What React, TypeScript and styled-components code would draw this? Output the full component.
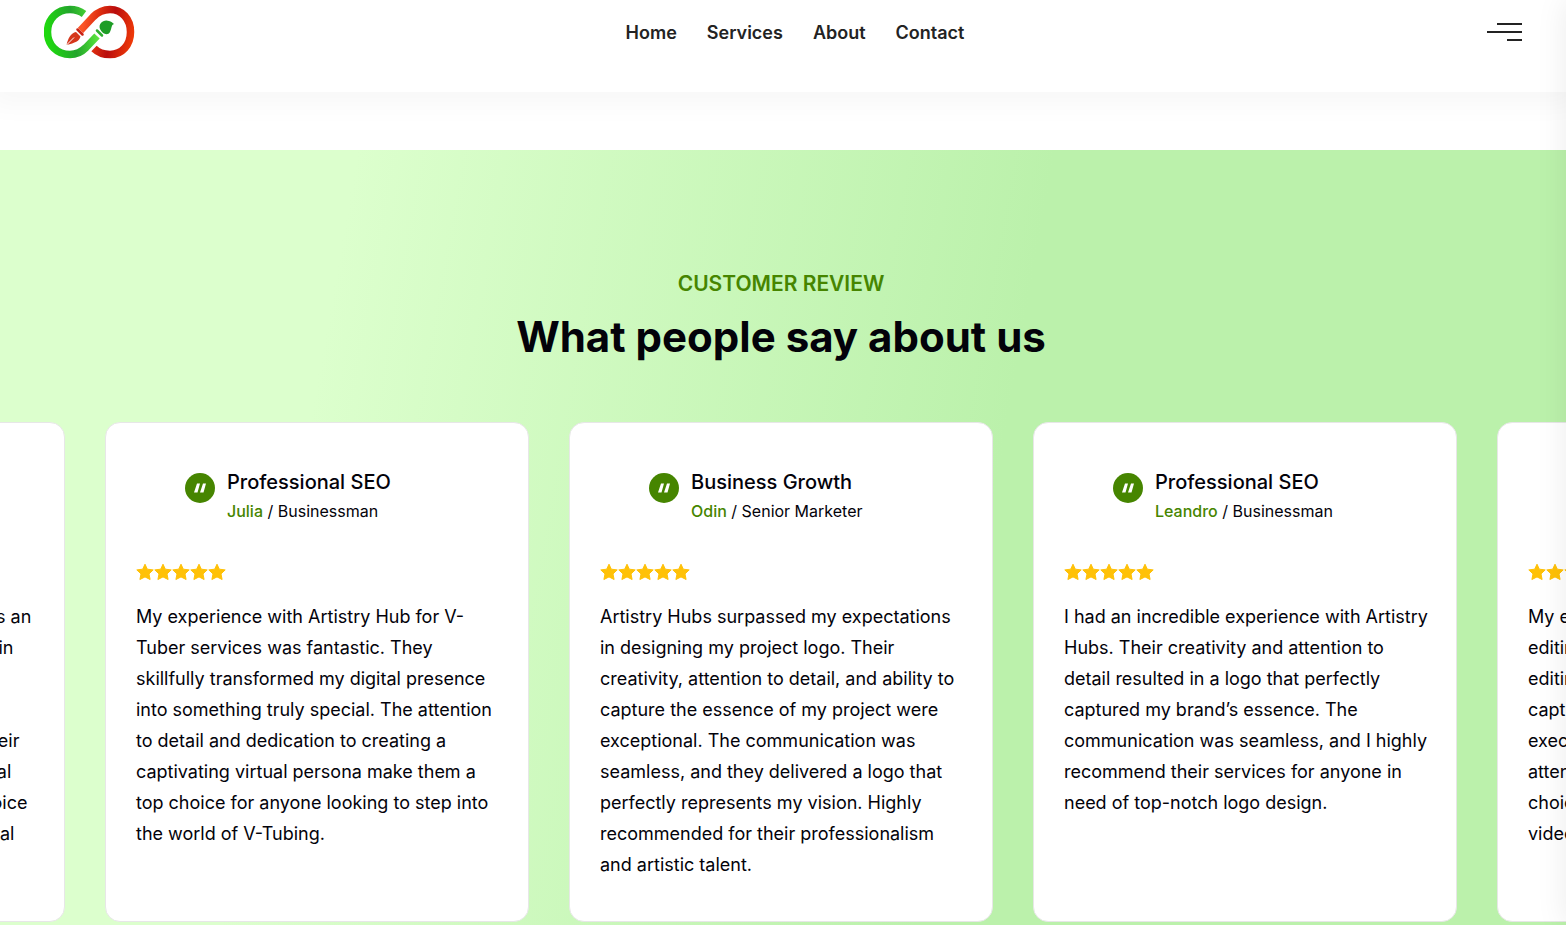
import React from "react";
import styled, { createGlobalStyle } from "styled-components";

const GlobalStyle = createGlobalStyle`
  *, *::before, *::after { box-sizing: border-box; }
  body {
    margin: 0;
    background: #fff;
    color: #03020a;
    font-family: Inter, "Liberation Sans", sans-serif;
    overflow-x: hidden;
  }
  h2, h3, p, ul { margin: 0; padding: 0; }
`;

const Page = styled.div`
  display: flex;
  flex-direction: column;
  min-height: 100vh;
`;

const Header = styled.header`
  display: grid;
  grid-template-columns: 1fr auto 1fr;
  align-items: start;
  height: 92px;
  padding: 0 44px;
  margin-bottom: 58px;
  background: #fff;
  box-shadow: 0 4px 24px 10px rgba(0, 0, 0, 0.03);
`;

const LogoLink = styled.a`
  display: block;
  width: 92px;
  height: 64px;
`;

const Nav = styled.nav`
  display: flex;
  gap: 30px;
  padding: 20px 0 0 24px;
`;

const NavLink = styled.a`
  font-size: 18px;
  line-height: 26px;
  font-weight: 600;
  color: #232323;
  text-decoration: none;
`;

const MenuButton = styled.button`
  justify-self: end;
  display: flex;
  flex-direction: column;
  align-items: flex-end;
  gap: 6px;
  margin-top: 23px;
  padding: 0;
  border: 0;
  background: none;
`;

const MenuBar = styled.span<{ $width: number }>`
  width: ${(p) => p.$width}px;
  height: 2px;
  background: #232323;
`;

const Section = styled.section`
  flex: 1;
  padding: 120px 4px 3px 0;
  background: linear-gradient(100deg, #dcffcd 21%, #bbf1ab 62%);
  overflow: hidden;
`;

const Eyebrow = styled.p`
  font-size: 21px;
  line-height: 28px;
  font-weight: 600;
  text-align: center;
  color: #468500;
`;

const Title = styled.h2`
  margin: 10px 0 56px;
  font-size: 42px;
  line-height: 58px;
  font-weight: 700;
  text-align: center;
`;

const Track = styled.ul`
  display: flex;
  justify-content: center;
  gap: 40px;
  list-style: none;
`;

const Card = styled.li`
  flex: 0 0 424px;
  min-width: 0;
  min-height: 500px;
  padding: 45px 30px 30px;
  border: 1px solid #e7e7e7;
  border-radius: 15px;
  background: #fff;
`;

const CardHead = styled.div`
  display: flex;
  gap: 12px;
  padding-left: 49px;
`;

const QuoteBadge = styled.span`
  display: flex;
  align-items: center;
  justify-content: center;
  width: 30px;
  height: 30px;
  margin-top: 5px;
  border-radius: 50%;
  background: #468500;
`;

const CardTitle = styled.h3`
  font-size: 20px;
  line-height: 28px;
  font-weight: 500;
`;

const Author = styled.p`
  font-size: 16px;
  line-height: 30px;
`;

const AuthorName = styled.span`
  font-weight: 500;
  color: #468500;
`;

const Stars = styled.div`
  display: flex;
  height: 20px;
  margin: 37px 0 18px;
`;

const Quote = styled.p`
  font-size: 18px;
  line-height: 31px;
  white-space: pre;
`;

const SidePanel = styled.aside`
  position: fixed;
  top: 0;
  bottom: 0;
  left: 100%;
  width: 300px;
  background: #fff;
  box-shadow: 0 0 30px rgba(0, 0, 0, 0.08);
`;

function Logo() {
  return (
    <svg width="92" height="64" viewBox="0 0 92 64" aria-hidden="true">
      <defs>
        <linearGradient id="green" gradientUnits="userSpaceOnUse" x1="4" y1="40" x2="56" y2="32">
          <stop offset="0" stopColor="#1fd80f" />
          <stop offset="0.5" stopColor="#23a52c" />
          <stop offset="0.75" stopColor="#3ec832" />
          <stop offset="1" stopColor="#66ec44" />
        </linearGradient>
        <linearGradient id="red" gradientUnits="userSpaceOnUse" x1="38" y1="30" x2="90" y2="40">
          <stop offset="0" stopColor="#fb5527" />
          <stop offset="0.25" stopColor="#e03010" />
          <stop offset="0.55" stopColor="#b90d0d" />
          <stop offset="1" stopColor="#f23c08" />
        </linearGradient>
      </defs>
      <path d="M40 14C36 11 32 9.500 26 9.500C13 9.500 3.500 19 3.500 32S13 54.500 26 54.500C33 54.500 38 51.500 42 47.500L53 36" fill="none" stroke="url(#green)" strokeWidth="7.500" />
      <path d="M36 31L49 17C54 12 59 9.500 66 9.500C78 9.500 86.500 19 86.500 32S78 54.500 66 54.500C59 54.500 54 52.500 50 48.500" fill="none" stroke="url(#red)" strokeWidth="7.500" />
      <path d="M32.500 27.500L40 35" stroke="#fff" strokeWidth="1.500" />
      <path d="M33.500 29.500L38.500 34.500" stroke="#c92215" strokeWidth="2.500" strokeLinecap="round" />
      <path d="M32 32L36.500 36.500C35.500 41 31 43 22.500 45C24 38 27 33 32 32Z" fill="#d5361b" />
      <path d="M22.500 45L30 37.500" stroke="#fff" strokeWidth="1" />
      <path d="M51 30L58.500 37.500" stroke="#fff" strokeWidth="1.500" />
      <path d="M53 30.500L58 35.500" stroke="#2eae2d" strokeWidth="2.500" strokeLinecap="round" />
      <path d="M56 29C54 23 60 19 65 21C67 21.500 69 23 70 24C67 25 68 28 66 32C64 35.500 59 35 56 29Z" fill="#1e9d26" />
    </svg>
  );
}

const STAR =
  "M9 1.200L11.300 6.200L17.200 6.900L13 10.900L14.100 16.500L9 13.900L3.900 16.500L5 10.900L0.800 6.900L6.700 6.200Z";

function Rating() {
  return (
    <Stars role="img" aria-label="5 out of 5 stars">
      <svg width="90" height="18" viewBox="0 0 90 18">
        {[0, 18, 36, 54, 72].map((x) => (
          <path key={x} d={STAR} transform={`translate(${x} 0)`} fill="#ffc107" stroke="#ffc107" strokeLinejoin="round" />
        ))}
      </svg>
    </Stars>
  );
}

interface Review {
  title: string;
  name: string;
  role: string;
  text: string;
}

const reviews: Review[] = [
  {
    title: "Business Growth",
    name: "Emma",
    role: "Author",
    text: `Working with the Artistry Hub staff was an
absolute pleasure. They always assist in
all of the work they do for us.
The whole group is made of
creative designers who freely share their
talent and they make every single visual
sparkle. They were an outstanding choice
for anyone who needs impressive digital
art.`,
  },
  {
    title: "Professional SEO",
    name: "Julia",
    role: "Businessman",
    text: `My experience with Artistry Hub for V-
Tuber services was fantastic. They
skillfully transformed my digital presence
into something truly special. The attention
to detail and dedication to creating a
captivating virtual persona make them a
top choice for anyone looking to step into
the world of V-Tubing.`,
  },
  {
    title: "Business Growth",
    name: "Odin",
    role: "Senior Marketer",
    text: `Artistry Hubs surpassed my expectations
in designing my project logo. Their
creativity, attention to detail, and ability to
capture the essence of my project were
exceptional. The communication was
seamless, and they delivered a logo that
perfectly represents my vision. Highly
recommended for their professionalism
and artistic talent.`,
  },
  {
    title: "Professional SEO",
    name: "Leandro",
    role: "Businessman",
    text: `I had an incredible experience with Artistry
Hubs. Their creativity and attention to
detail resulted in a logo that perfectly
captured my brand’s essence. The
communication was seamless, and I highly
recommend their services for anyone in
need of top-notch logo design.`,
  },
  {
    title: "Business Growth",
    name: "Oliver",
    role: "Creator",
    text: `My experience with the video
editing team was excellent. Their
editing skills are superb, and they
captured my vision with flawless
execution. Their creativity and
attention to detail make them a top
choice for anyone in need of
video editing.`,
  },
];

function ReviewCard({ title, name, role, text }: Review) {
  return (
    <Card>
      <CardHead>
        <QuoteBadge>
          <svg width="14" height="10" viewBox="0 0 14 10" aria-hidden="true">
            <path d="M4 0.500H7L4.500 9.500H1ZM10 0.500H13L10.500 9.500H7Z" fill="#fff" />
          </svg>
        </QuoteBadge>
        <div>
          <CardTitle>{title}</CardTitle>
          <Author>
            <AuthorName>{name}</AuthorName> / {role}
          </Author>
        </div>
      </CardHead>
      <Rating />
      <Quote>{text}</Quote>
    </Card>
  );
}

export default function App() {
  return (
    <Page>
      <GlobalStyle />
      <Header>
        <LogoLink href="#" aria-label="Artistry Hubs">
          <Logo />
        </LogoLink>
        <Nav>
          {["Home", "Services", "About", "Contact"].map((item) => (
            <NavLink key={item} href={`#${item.toLowerCase()}`}>
              {item}
            </NavLink>
          ))}
        </Nav>
        <MenuButton type="button" aria-label="Open menu">
          <MenuBar $width={25} />
          <MenuBar $width={35} />
          <MenuBar $width={15} />
        </MenuButton>
      </Header>
      <Section>
        <Eyebrow>CUSTOMER REVIEW</Eyebrow>
        <Title>What people say about us</Title>
        <Track>
          {reviews.map((review, i) => (
            <ReviewCard key={i} {...review} />
          ))}
        </Track>
      </Section>
      <SidePanel aria-hidden="true" />
    </Page>
  );
}
